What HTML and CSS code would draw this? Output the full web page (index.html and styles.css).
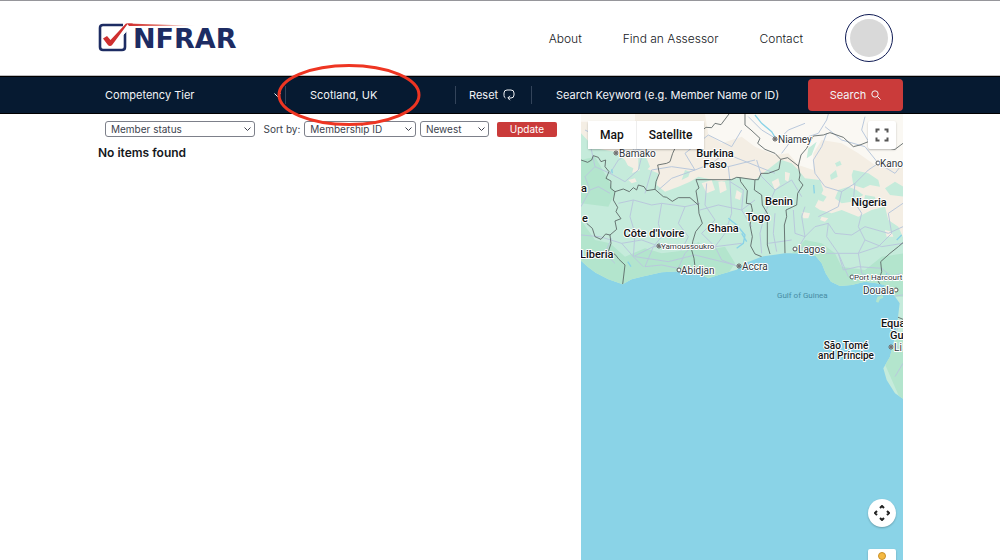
FILE: index.html
```html
<!DOCTYPE html>
<html lang="en">
<head>
<meta charset="utf-8">
<meta name="viewport" content="width=device-width, initial-scale=1">
<title>NFRAR – Find an Assessor</title>
<link rel="stylesheet" href="styles.css">
</head>
<body>
<header class="header">
  <a class="logo" href="#" aria-label="NFRAR home">
    <svg class="logo-mark" width="100" height="32" viewBox="0 0 100 32" aria-hidden="true">
      <defs><linearGradient id="swoosh"><stop offset="0" stop-color="#cf2f2f"/><stop offset=".45" stop-color="#e06a60"/><stop offset="1" stop-color="#fff"/></linearGradient></defs>
      <path d="M25 3H5Q2 3 2 6V25Q2 28 5 28H24Q27 28 27 25V9" fill="none" stroke="#1d2c63" stroke-width="2.6"/>
      <path d="M29 1L99 3.600L33 4.200L15 24Q12 27 9.500 24L4 17L9 13.500L12.500 17.500Z" fill="#fff" stroke="#fff" stroke-width="1"/>
      <path d="M29 1.500L99 3.700L31 4Z" fill="url(#swoosh)"/>
      <path d="M30 1.500L14.500 22.500Q12 25.500 9.500 22.500L5 16.500L9 14L12.500 18L28 1.500H35L31.500 4Z" fill="#cf2f2f"/>
    </svg>
    <span class="logo-text">NFRAR</span>
  </a>
  <nav class="nav" aria-label="Main">
    <a href="#">About</a>
    <a href="#">Find an Assessor</a>
    <a href="#">Contact</a>
  </nav>
  <a class="avatar" href="#" aria-label="Account"><span class="avatar-fill"></span></a>
</header>

<form class="searchbar">
  <div class="tier">
    <select aria-label="Competency Tier"><option>Competency Tier</option></select>
    <svg class="chevron" width="7" height="4" viewBox="0 0 7 4" aria-hidden="true"><path d="M.5.5L3.500 3.500L6.500.5"/></svg>
  </div>
  <div class="cell place">
    <input type="text" aria-label="Location" value="Scotland, UK">
    <svg class="ring" width="144" height="64" viewBox="0 0 144 64" aria-hidden="true"><ellipse cx="72" cy="32" rx="70" ry="29.500"/></svg>
  </div>
  <div class="cell">
    <button class="reset" type="reset">Reset
      <svg width="12" height="12" viewBox="0 0 12 12" aria-hidden="true"><path d="M2.500 9Q1 8.500 1 6.500V4Q1 1 4 1H8Q11 1 11 4V6Q11 9 8 9H5M7 6.800L4.800 9L7 11.200"/></svg>
    </button>
  </div>
  <div class="cell keyword"><input type="text" aria-label="Search keyword" placeholder="Search Keyword (e.g. Member Name or ID)"></div>
  <button class="search" type="submit">Search
    <svg width="10" height="10" viewBox="0 0 10 10" aria-hidden="true"><circle cx="4" cy="4" r="3.200"/><path d="M6.400 6.400L9.500 9.500"/></svg>
  </button>
</form>

<main class="content">
  <section class="results">
    <form class="filters">
      <div class="pick status">
        <select aria-label="Member status"><option>Member status</option></select>
        <svg class="chevron" width="7" height="4" viewBox="0 0 7 4" aria-hidden="true"><path d="M.5.5L3.500 3.500L6.500.5"/></svg>
      </div>
      <label class="sort-label" for="sort">Sort by:</label>
      <div class="pick sort">
        <select id="sort"><option>Membership ID</option></select>
        <svg class="chevron" width="7" height="4" viewBox="0 0 7 4" aria-hidden="true"><path d="M.5.5L3.500 3.500L6.500.5"/></svg>
      </div>
      <div class="pick order">
        <select aria-label="Sort order"><option>Newest</option></select>
        <svg class="chevron" width="7" height="4" viewBox="0 0 7 4" aria-hidden="true"><path d="M.5.5L3.500 3.500L6.500.5"/></svg>
      </div>
      <button class="update" type="submit">Update</button>
    </form>
    <h2 class="empty">No items found</h2>
  </section>

  <section class="map" aria-label="Map">
    <svg class="map-canvas" width="100%" height="100%">
      <defs>
        <clipPath id="coast"><path d="M18 12V452L38 470L62 488L100 508L143 523L170 508L200 500L260 487L330 483L375 490L400 505L440 492L485 479L510 460L560 440L630 430L690 430L722 438L740 460L752 490L768 515L795 528L830 525L870 515L905 520L930 525L925 540L950 545L974 580L968 630L960 680L945 740L925 775L935 810L960 850L990 870V12Z"/></clipPath>
      </defs>
      <g transform="scale(.33333) translate(-18 -12)">
        <g clip-path="url(#coast)">
          <rect x="18" y="12" width="980" height="870" fill="#c5ebdb"/>
          <path fill="#b3e5cd" d="M18 330L60 390L105 400L150 440L210 415L260 430L340 420L370 395L400 420L450 410L480 460L440 520L330 510L140 540L18 500ZM640 440L690 390L740 400L780 430L800 470L870 480L920 440L990 430V560L760 560L720 470ZM18 150L60 140L95 200L120 250L100 290L18 280ZM920 740L990 660V900Z"/>
          <path fill="#f4eee4" d="M18 12H990V395L970 350L940 330L930 290L890 300L850 320L800 300L770 310L735 300L720 290L745 240L735 210L690 205L670 180L615 150L570 185L540 210L490 200L440 215L370 200L345 215L310 230L270 245L245 225L250 190L210 175L170 190L150 150L120 125L60 115L18 70Z"/>
          <path fill="#faf8f3" d="M390 12H990V160L950 150L900 165L850 130L800 100L740 90L715 130L715 180L670 165L640 130L600 135L540 110L500 80L440 100L400 75ZM18 12H180V35H18Z"/>
          <path fill="#c5ebdb" d="M190 140l25 5 10 25-20 20-15-15zM155 165l20 10-5 20-20-5zM330 180l15 5-5 15-20 10zM620 150l30 10 20 20-10 20-40 5-30-25zM700 115l25-20-15 40-15 10zM780 160l15-8 5 12-15 6zM765 195l18-15 5 20-20 10zM835 180l45 10 30 20 5 20-30-5-20 10-30-10-5-30zM790 240l30-10 25 10 20 15-35 20-30 5-20-15zM930 235l30-20 25 15v30l-40-5zM870 255l30 5 5 20-40 5zM735 250l20 10-10 15-15-5z"/>
          <path fill="#f4eee4" d="M160 210l20-5 5 10-15 5zM380 220l30-10 10 30-25 10zM430 215l20 0 5 25-20 10zM485 240l15 10-5 20-15-5zM590 215l20-10 5 20-15 15zM630 185l15 5-5 25-10-5zM680 305l25 5-5 15-15 0zM740 320l20 5-10 10-15-5zM930 360l20 5 5 15-20 0zM255 205l15 0 0 15-15 0zM290 190l20 0-5 15-20 0z"/>
          <g fill="none" stroke="#b9c8dc" stroke-width="3" stroke-linejoin="round">
            <path d="M18 290L45 240L70 230L105 250M45 240L30 200L60 170L105 190L130 150L180 120L250 110M60 170L45 100M105 190L150 215L190 180L200 140L160 105M18 375L75 380L140 400L175 440L205 470M110 385L90 430L120 460M130 280L175 270L230 285L260 280L330 290L375 280"/>
            <path d="M175 270L165 320L180 370L175 440L235 410L260 380L250 340L260 280M330 290L310 340L340 380L320 420L270 410L235 410L210 470L260 465L310 475L330 430L360 400M140 400L200 390L250 408M180 440L280 455L360 435L420 450L480 465M210 250L230 180L290 170L360 180L410 160L460 170L540 150"/>
            <path d="M250 240L290 205L360 180L330 130L400 75L470 110L500 60M410 160L450 130L600 190M460 170L465 215L470 310L450 370L420 410L440 450L490 470M375 300L430 285L500 300L540 270M395 220L390 285L420 330L380 370L420 410L500 400M465 215L505 240L500 300L530 350"/>
            <path d="M545 150L560 200L600 240L570 310L555 370L560 430M600 240L650 210L680 260M600 310L595 370L605 425M580 400L650 390M655 300L660 370L690 380L720 350L760 340L780 370L830 375L870 350L940 370L984 350M690 380L665 420M690 290L680 320L690 380"/>
            <path d="M620 130L650 90L700 80L730 70L755 30L760 12M755 70L740 110L715 150L720 190L750 230L800 245L840 220L880 180L910 160L870 110L800 90L750 50M910 160L960 190L984 160M840 220L835 270L860 310L850 350L870 390L850 430L860 490L880 500M800 245L790 290L730 320M870 390L920 410L984 400M760 340L755 380L790 430L805 480L850 470L920 475"/>
            <path d="M665 415L710 410L755 430L790 430L850 430L910 410L950 370L940 310L984 280M790 430L820 500M920 475L950 500L980 490M945 560L984 555M520 20L560 60L610 90L640 60L690 40M870 20L860 60L890 110M970 650L950 700L984 720M960 800L984 760M30 60L110 100"/>
          </g>
          <g fill="none" stroke="#8ad3e7" stroke-width="4"><path d="M540 15L560 40L590 65L605 90M460 325L485 345L510 375L505 400L485 415M500 370L515 395M158 455L168 470M716 225L718 250M110 178L112 190M980 375L965 390M930 515L935 490"/></g>
          <g fill="none" stroke="#555f5f" stroke-width="2.500" stroke-linejoin="round">
            <path d="M18 150L38 157L50 150L55 137L70 142L78 155L92 150L90 170L102 185L93 205L108 213L107 235L120 245L115 270L128 292L123 305L138 326L120 333L125 358L105 375L92 372L78 388L60 380L52 355L35 340"/>
            <path d="M120 245L145 237L163 245L175 233L185 240L190 225L207 230L215 242L240 238L265 260L275 262L292 274L310 263L345 263L370 285L372 310L382 340L362 365L353 395L350 420L357 445L360 470L370 478M240 238L243 215L253 190L248 165L275 160L285 155L293 130L300 115L345 95L370 70L393 52L410 53L420 40L438 44L462 12"/>
            <path d="M370 285L363 242L372 234L363 209H470L485 202L495 203L538 209H550L558 190L580 190L612 178L617 148L600 130L570 118L548 100L555 85L528 60L510 45V12M495 203L497 215L517 242L514 280L528 282L532 300L525 345L532 380L527 408L540 432L560 440M540 209L538 240L560 255L562 285L577 310V405L585 432"/>
            <path d="M617 148L638 143L670 168L675 195L672 210L684 225L668 250L665 285L633 300L635 320L628 345L630 430M670 168L678 135L695 115L715 78L745 75L765 68L805 82L835 110L855 105L880 95L915 110L960 118L984 100M105 375L108 400L100 425L120 433L132 448L150 465L143 523M984 398L970 410L945 430L917 455L920 485L910 515L920 530M965 620L984 628"/>
          </g>
        </g>
        <path fill="#b3e5cd" d="M907 560l15-5 3 8-10 5-5 10-7-3z"/>
      </g>
      <g class="cities">
        <circle cx="35" cy="39" r="2"/><circle cx="194" cy="25" r="2"/><circle cx="297" cy="49" r="2"/><circle cx="78" cy="132" r="2"/><circle cx="98" cy="156" r="2"/><circle cx="158" cy="152" r="2"/><circle cx="214" cy="135" r="2"/><circle cx="271" cy="163" r="2"/><circle cx="315" cy="176" r="2"/><circle cx="310" cy="233" r="2"/>
      </g>
      <g class="capitals"><circle cx="35" cy="39" r="1"/><circle cx="194" cy="25" r="1"/><circle cx="78" cy="132" r="1"/><circle cx="158" cy="152" r="1"/><circle cx="310" cy="233" r="1"/></g>
      <g class="town">
        <text x="38" y="43">Bamako</text><text x="197" y="29">Niamey</text><text x="299" y="53">Kano</text>
        <text x="100" y="160">Abidjan</text><text x="161" y="156">Accra</text><text x="217" y="139">Lagos</text>
        <text x="282" y="180">Douala</text><text x="313" y="237">Li</text>
      </g>
      <g class="town small"><text x="80" y="135">Yamoussoukro</text><text x="273" y="166">Port Harcourt</text></g>
      <g class="country">
        <text x="134" y="43">Burkina</text><text x="134" y="54">Faso</text>
        <text x="73" y="123">Côte d'Ivoire</text><text x="142" y="118">Ghana</text>
        <text x="177" y="107">Togo</text><text x="198" y="91">Benin</text><text x="288" y="92">Nigeria</text>
        <text class="edge" x="0" y="78">a</text><text class="edge" x="1" y="108">e</text><text class="edge" x="-1" y="144">Liberia</text>
        <text class="edge" x="300" y="213">Equa</text><text class="edge" x="309" y="225">Gu</text>
      </g>
      <g class="country island"><text x="265" y="235">São Tomé</text><text x="265" y="245">and Príncipe</text></g>
      <text class="gulf" x="196" y="184">Gulf of Guinea</text>
    </svg>
    <div class="map-types"><button type="button">Map</button><button type="button">Satellite</button></div>
    <button class="tool fullscreen" type="button" aria-label="Toggle fullscreen">
      <svg width="14" height="14" viewBox="0 0 14 14"><path d="M1.500 4.500V1.500H4.500M9.500 1.500H12.500V4.500M12.500 9.500V12.500H9.500M4.500 12.500H1.500V9.500"/></svg>
    </button>
    <button class="tool camera" type="button" aria-label="Map camera controls">
      <svg width="16" height="16" viewBox="0 0 16 16"><path d="M6 3L8 1L10 3M6 13L8 15L10 13M3 6L1 8L3 10M13 6L15 8L13 10"/></svg>
    </button>
    <button class="tool pegman" type="button" aria-label="Street View">
      <svg width="14" height="22" viewBox="0 0 14 22"><circle cx="7" cy="4" r="3.500" fill="#f5b942" stroke="#c99028"/><path d="M3 9H11V15H9.500V21H4.500V15H3Z" fill="#f5b942"/></svg>
    </button>
  </section>
</main>
</body>
</html>
```
FILE: styles.css
```css
* { box-sizing: border-box; }

body {
  margin: 0;
  height: 100vh;
  display: flex;
  flex-direction: column;
  overflow: hidden;
  background: #fff;
  color: #15171c;
  font-family: Inter, "Open Sans", sans-serif;
  font-size: 11px;
}

button, input, select {
  font: inherit;
  color: inherit;
  margin: 0;
  padding: 0;
  border: 0;
  background: none;
  appearance: none;
}

button { cursor: pointer; }
a { color: inherit; text-decoration: none; }

/* Header */
.header {
  display: flex;
  align-items: center;
  flex: none;
  height: 76px;
  padding: 0 107px 0 98px;
  border-top: 1px solid #96969b;
  border-bottom: 1px solid #bdbdc0;
}

.logo { display: grid; align-items: center; color: #1d2c63; }
.logo-mark, .logo-text { grid-area: 1 / 1; }
.logo-text {
  padding: 2px 0 0 35px;
  font: bold 27px/32px "DejaVu Sans", sans-serif;
}
.logo-mark { z-index: 1; }

.nav {
  display: flex;
  gap: 41px;
  margin-left: auto;
  font-size: 12px;
  font-weight: 300;
}

.avatar {
  width: 48px;
  height: 48px;
  margin-left: 42px;
  padding: 4px;
  border: 1px solid #101c55;
  border-radius: 50%;
}
.avatar-fill { display: block; height: 100%; border-radius: 50%; background: #d9d9d9; }

/* Search bar */
.searchbar {
  display: grid;
  grid-template-columns: 187fr 170fr 76fr 277fr 95fr;
  align-items: center;
  flex: none;
  height: 38px;
  padding: 0 97px 0 98px;
  border-top: 1px solid #000;
  border-bottom: 1px solid #000;
  background: #061a31;
  color: #f2f4f7;
}

.searchbar select, .searchbar input { width: 100%; height: 18px; }
.tier, .place { position: relative; }
.tier select { padding-left: 7px; }
.tier option { color: #15171c; }
.cell { height: 18px; border-left: 1px solid #33445a; }
.place input { padding-left: 24px; }
.keyword input { padding-left: 24px; }
.keyword input::placeholder { color: #f2f4f7; opacity: 1; }

.chevron {
  position: absolute;
  right: 4px;
  top: 50%;
  margin-top: -2px;
  fill: none;
  stroke: currentColor;
  pointer-events: none;
}

.ring {
  position: absolute;
  left: -9px;
  top: -23px;
  z-index: 2;
  fill: none;
  stroke: #ee3522;
  stroke-width: 3;
  pointer-events: none;
}

.reset {
  display: flex;
  align-items: center;
  gap: 5px;
  height: 18px;
  padding-left: 13px;
}
.reset svg, .search svg { fill: none; stroke: currentColor; }

.search {
  display: flex;
  align-items: center;
  justify-content: center;
  gap: 5px;
  height: 32px;
  border-radius: 4px;
  background: #ca3b3a;
}

/* Results */
.content {
  display: grid;
  grid-template-columns: 3fr 2fr;
  flex: 1;
  min-height: 0;
  padding: 0 97px 0 98px;
}

.filters {
  display: flex;
  align-items: center;
  gap: 4px;
  padding: 7px 24px 0 7px;
  font-size: 10px;
  color: #3c3f4d;
}

.pick { position: relative; height: 16px; }
.pick select {
  width: 100%;
  height: 16px;
  padding-left: 5px;
  border: 1px solid #7d808a;
  border-radius: 3px;
  background: #fff;
}
.status { flex: 151; }
.sort { flex: 112; }
.order { flex: 69; }
.sort-label { padding-left: 4px; white-space: nowrap; }

.update {
  height: 15px;
  margin-left: 4px;
  padding: 0 13px;
  border-radius: 2px;
  background: #ca3b3a;
  color: #fff;
}

.empty { margin: 8px 0 0; font-size: 12px; line-height: 16px; font-weight: 600; }

/* Map */
.map {
  position: relative;
  overflow: hidden;
  background: #8ad3e7;
  font-family: Roboto, sans-serif;
}
.map-canvas { display: block; }
.map text { paint-order: stroke; stroke: #fff; stroke-width: 2px; stroke-linejoin: round; }

.town { font-size: 10px; fill: #30353a; }
.small { font-size: 8px; }
.country { font-size: 11px; font-weight: 500; fill: #101214; text-anchor: middle; }
.island { font-size: 10px; }
.country .edge { text-anchor: start; }
.map .gulf { font-size: 8px; fill: #478ca3; stroke: none; }
.cities { fill: #fff; stroke: #555; }
.capitals { fill: #444; }

.map-types {
  position: absolute;
  left: 7px;
  top: 7px;
  display: flex;
  gap: 1px;
  border-radius: 2px;
  background: #eee;
  box-shadow: 0 1px 2px rgba(0, 0, 0, .25);
}
.map-types button {
  height: 28px;
  padding: 0 12px;
  background: #fff;
  color: #111;
  font-size: 12px;
  font-weight: 500;
}

.tool {
  position: absolute;
  right: 7px;
  display: grid;
  place-items: center;
  width: 28px;
  height: 28px;
  border-radius: 2px;
  background: #fff;
  box-shadow: 0 1px 2px rgba(0, 0, 0, .25);
}
.tool svg { fill: none; stroke: #555; stroke-width: 2; }
.fullscreen { top: 7px; }
.camera { bottom: 33px; border-radius: 50%; }
.camera svg { stroke: #222; }
.pegman { bottom: -17px; }
.pegman svg { stroke-width: 1; stroke: none; }
```
